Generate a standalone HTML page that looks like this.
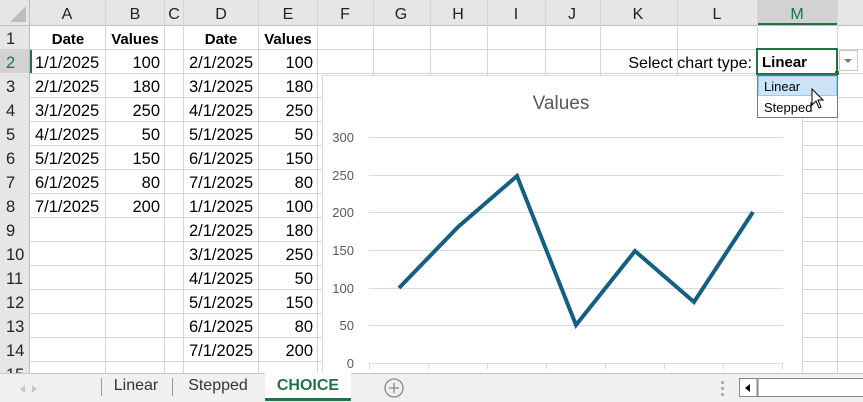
<!DOCTYPE html>
<html><head><meta charset="utf-8"><style>
html,body{margin:0;padding:0;background:#fff;overflow:hidden}
svg{display:block;font-family:"Liberation Sans",Arial,sans-serif}
</style></head><body>
<svg width="863" height="402" xmlns="http://www.w3.org/2000/svg">
<rect width="863" height="402" fill="#fff"/>
<rect x="0" y="0" width="863" height="25" fill="#e6e6e6"/>
<rect x="0" y="0" width="30" height="373" fill="#e6e6e6"/>
<rect x="0" y="49" width="30" height="24" fill="#d2d2d2"/>
<rect x="757" y="0" width="81" height="25" fill="#d2d2d2"/>
<line x1="757" y1="24" x2="838" y2="24" stroke="#217346" stroke-width="2"/>
<polygon points="26,6 26,22 10,22" fill="#bdbdbd"/>
<g stroke="#d4d4d4" stroke-width="1">
<line x1="0" y1="25.5" x2="863" y2="25.5" stroke="#bdbdbd"/>
<line x1="29.5" y1="0" x2="29.5" y2="373" stroke="#bdbdbd"/>
<line x1="30" y1="49.5" x2="863" y2="49.5"/><line x1="30" y1="73.5" x2="863" y2="73.5"/>
<line x1="30" y1="97.5" x2="863" y2="97.5"/><line x1="30" y1="121.5" x2="863" y2="121.5"/>
<line x1="30" y1="145.5" x2="863" y2="145.5"/><line x1="30" y1="169.5" x2="863" y2="169.5"/>
<line x1="30" y1="193.5" x2="863" y2="193.5"/><line x1="30" y1="217.5" x2="863" y2="217.5"/>
<line x1="30" y1="241.5" x2="863" y2="241.5"/><line x1="30" y1="265.5" x2="863" y2="265.5"/>
<line x1="30" y1="289.5" x2="863" y2="289.5"/><line x1="30" y1="313.5" x2="863" y2="313.5"/>
<line x1="30" y1="337.5" x2="863" y2="337.5"/><line x1="30" y1="361.5" x2="863" y2="361.5"/>
<line x1="105.5" y1="0" x2="105.5" y2="373"/><line x1="164.5" y1="0" x2="164.5" y2="373"/>
<line x1="183.5" y1="0" x2="183.5" y2="373"/><line x1="258.5" y1="0" x2="258.5" y2="373"/>
<line x1="317.5" y1="0" x2="317.5" y2="373"/><line x1="373.5" y1="0" x2="373.5" y2="373"/>
<line x1="430.5" y1="0" x2="430.5" y2="373"/><line x1="487.5" y1="0" x2="487.5" y2="373"/>
<line x1="545.5" y1="0" x2="545.5" y2="373"/><line x1="600.5" y1="0" x2="600.5" y2="373"/>
<line x1="677.5" y1="0" x2="677.5" y2="373"/><line x1="757.5" y1="0" x2="757.5" y2="373"/>
<line x1="837.5" y1="0" x2="837.5" y2="373"/>
</g>
<g font-size="16" fill="#222" text-anchor="middle">
<text x="67" y="19">A</text><text x="135" y="19">B</text><text x="174" y="19">C</text><text x="221" y="19">D</text><text x="288" y="19">E</text><text x="345" y="19">F</text><text x="401" y="19">G</text><text x="458" y="19">H</text><text x="516" y="19">I</text><text x="572" y="19">J</text><text x="638" y="19">K</text><text x="717" y="19">L</text><text x="797" y="19" fill="#217346">M</text>
</g>
<g font-size="16.5" fill="#222">
<text x="6" y="44">1</text><text x="6" y="68" fill="#217346">2</text><text x="6" y="92">3</text><text x="6" y="116">4</text><text x="6" y="140">5</text><text x="6" y="164">6</text><text x="6" y="188">7</text><text x="6" y="212">8</text><text x="6" y="236">9</text><text x="6" y="260">10</text><text x="6" y="284">11</text><text x="6" y="308">12</text><text x="6" y="332">13</text><text x="6" y="356">14</text><text x="6" y="380">15</text>
</g>
<line x1="31" y1="50" x2="31" y2="73" stroke="#217346" stroke-width="2"/>
<g font-size="16.5" fill="#000">
<g font-weight="bold" text-anchor="middle" font-size="15"><text x="68" y="44">Date</text><text x="135" y="44">Values</text><text x="221" y="44">Date</text><text x="288" y="44">Values</text></g>
<text x="35" y="68">1/1/2025</text><text x="35" y="92">2/1/2025</text><text x="35" y="116">3/1/2025</text><text x="35" y="140">4/1/2025</text><text x="35" y="164">5/1/2025</text><text x="35" y="188">6/1/2025</text><text x="35" y="212">7/1/2025</text>
<g text-anchor="end"><text x="160" y="68">100</text><text x="160" y="92">180</text><text x="160" y="116">250</text><text x="160" y="140">50</text><text x="160" y="164">150</text><text x="160" y="188">80</text><text x="160" y="212">200</text></g>
<text x="189" y="68">2/1/2025</text><text x="189" y="92">3/1/2025</text><text x="189" y="116">4/1/2025</text><text x="189" y="140">5/1/2025</text><text x="189" y="164">6/1/2025</text><text x="189" y="188">7/1/2025</text><text x="189" y="212">1/1/2025</text><text x="189" y="236">2/1/2025</text><text x="189" y="260">3/1/2025</text><text x="189" y="284">4/1/2025</text><text x="189" y="308">5/1/2025</text><text x="189" y="332">6/1/2025</text><text x="189" y="356">7/1/2025</text>
<g text-anchor="end"><text x="313" y="68">100</text><text x="313" y="92">180</text><text x="313" y="116">250</text><text x="313" y="140">50</text><text x="313" y="164">150</text><text x="313" y="188">80</text><text x="313" y="212">100</text><text x="313" y="236">180</text><text x="313" y="260">250</text><text x="313" y="284">50</text><text x="313" y="308">150</text><text x="313" y="332">80</text><text x="313" y="356">200</text></g>
<text x="752" y="68" text-anchor="end" font-size="16">Select chart type:</text>
</g>
<rect x="322.5" y="75.5" width="480" height="300" fill="#fff" stroke="#d9d9d9"/>
<text x="561" y="109" font-size="19" fill="#595959" text-anchor="middle">Values</text>
<g stroke="#d9d9d9" stroke-width="1">
<line x1="369" y1="137.5" x2="783" y2="137.5"/><line x1="369" y1="175.5" x2="783" y2="175.5"/><line x1="369" y1="212.5" x2="783" y2="212.5"/><line x1="369" y1="250.5" x2="783" y2="250.5"/><line x1="369" y1="288.5" x2="783" y2="288.5"/><line x1="369" y1="325.5" x2="783" y2="325.5"/><line x1="369" y1="363.5" x2="783" y2="363.5"/>
<line x1="369.5" y1="363" x2="369.5" y2="369"/><line x1="428.5" y1="363" x2="428.5" y2="369"/><line x1="487.5" y1="363" x2="487.5" y2="369"/><line x1="546.5" y1="363" x2="546.5" y2="369"/><line x1="605.5" y1="363" x2="605.5" y2="369"/><line x1="664.5" y1="363" x2="664.5" y2="369"/><line x1="723.5" y1="363" x2="723.5" y2="369"/><line x1="782.5" y1="363" x2="782.5" y2="369"/>
</g>
<g font-size="13" fill="#595959" text-anchor="end">
<text x="354" y="142">300</text><text x="354" y="180">250</text><text x="354" y="217">200</text><text x="354" y="255">150</text><text x="354" y="293">100</text><text x="354" y="330">50</text><text x="354" y="368">0</text>
</g>
<polyline points="399,288 458,227 517,176 576,325 635,251 694,302 753,212" fill="none" stroke="#156082" stroke-width="4" stroke-linejoin="miter"/>
<rect x="757" y="49" width="80" height="25" fill="#fff" stroke="#217346" stroke-width="2"/>
<rect x="835" y="71" width="4" height="4" fill="#217346"/>
<text x="762" y="67" font-size="15" font-weight="bold">Linear</text>
<rect x="839.5" y="50.5" width="18" height="20" fill="#fff" stroke="#c8c8c8"/>
<polygon points="844,59 852,59 848,63" fill="#777"/>
<rect x="757.5" y="75.5" width="80" height="42" fill="#fff" stroke="#7a7a7a"/>
<rect x="758.5" y="76.5" width="78" height="19" fill="#cce4f7" stroke="#99c9ef"/>
<text x="764" y="91" font-size="13">Linear</text>
<text x="764" y="112" font-size="13">Stepped</text>
<path d="M812,89 L812,105 L816,101 L819,108 L821,107 L818,100 L823,100 Z" fill="#fff" stroke="#000" stroke-width="1"/>
<rect x="0" y="373" width="863" height="29" fill="#f0f0f0"/>
<line x1="0" y1="373.5" x2="863" y2="373.5" stroke="#c6c6c6"/>
<polygon points="25,385 20,389 25,393" fill="#c8c8c8"/><polygon points="32,385 37,389 32,393" fill="#c8c8c8"/>
<line x1="101.5" y1="378" x2="101.5" y2="396" stroke="#999"/>
<line x1="172.5" y1="378" x2="172.5" y2="396" stroke="#999"/>
<text x="136" y="390" font-size="16" fill="#333" text-anchor="middle">Linear</text>
<text x="218" y="390" font-size="16" fill="#333" text-anchor="middle">Stepped</text>
<rect x="265" y="373" width="86" height="26" fill="#fff"/>
<rect x="265" y="398" width="86" height="3" fill="#217346"/>
<text x="308" y="390" font-size="16" font-weight="bold" fill="#217346" text-anchor="middle">CHOICE</text>
<circle cx="394" cy="388" r="9" fill="none" stroke="#888" stroke-width="1.3"/>
<path d="M389,388 H399 M394,383 V393" stroke="#888" stroke-width="1.3"/>
<g fill="#b0b0b0"><rect x="721" y="381" width="3" height="3"/><rect x="721" y="387" width="3" height="3"/><rect x="721" y="393" width="3" height="3"/></g>
<rect x="739.5" y="378.5" width="130" height="18" fill="#fff" stroke="#888"/>
<line x1="757.5" y1="379" x2="757.5" y2="396" stroke="#888" stroke-width="2"/>
<polygon points="750,384 745,388 750,392" fill="#000"/>
</svg>
</body></html>
